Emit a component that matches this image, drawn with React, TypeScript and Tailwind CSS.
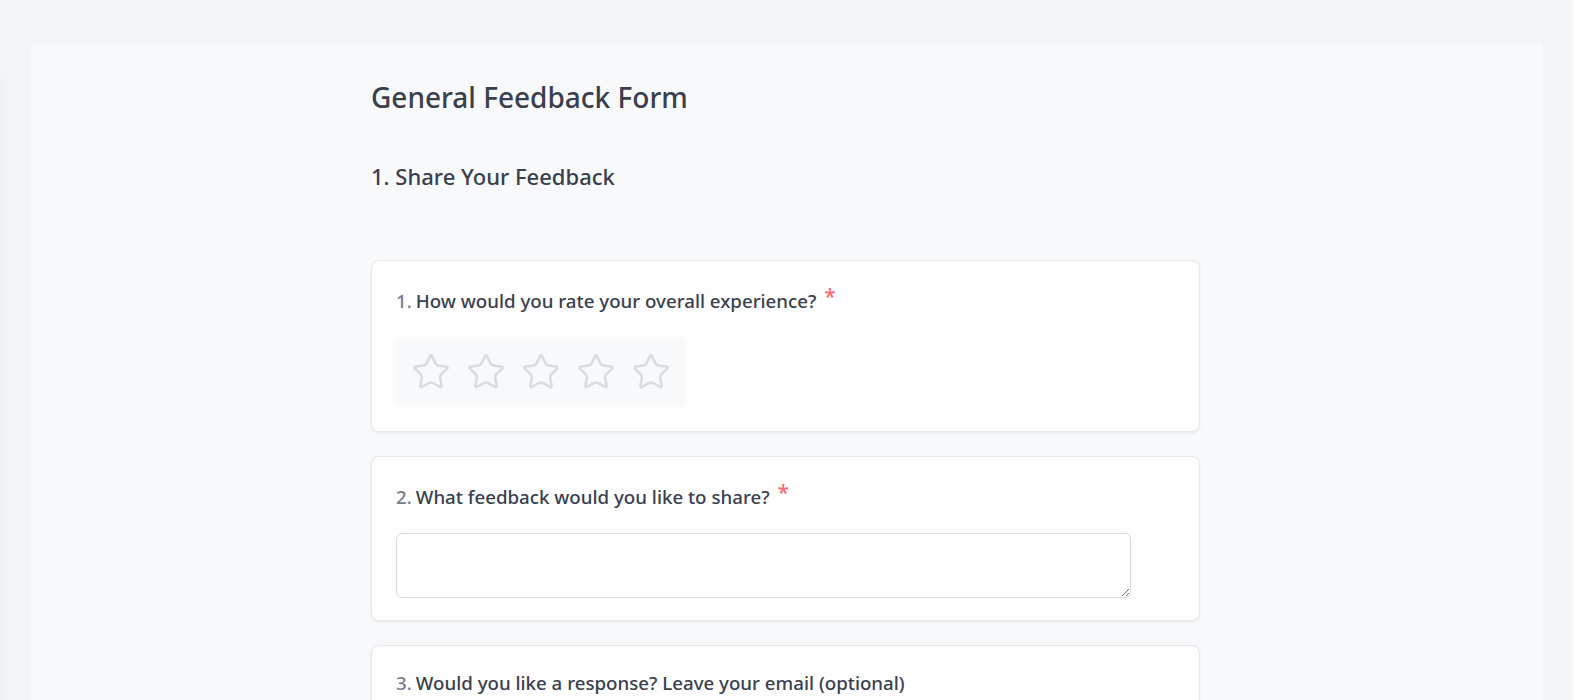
import { Star } from "lucide-react";

const questions = [
  { n: 1, text: "How would you rate your overall experience?", required: true, kind: "rating" },
  { n: 2, text: "What feedback would you like to share?", required: true, kind: "text" },
  { n: 3, text: "Would you like a response? Leave your email (optional)", required: false, kind: "email" },
];

function QuestionLabel({ n, text, required }: { n: number; text: string; required: boolean }) {
  return (
    <div className={`flex items-center text-[18.7px] font-medium text-[#3a3f4d] ${required ? "h-[33px]" : "h-[26px]"}`}>
      <span className="text-[#777c88] mr-[4px]">{n}.</span>
      <span>{text}</span>
      {required && <span className="ml-[8px] text-[21px] leading-none text-[#f26d6d] relative -top-[5px]">*</span>}
    </div>
  );
}

export default function App() {
  return (
    <div className="h-screen overflow-hidden bg-white" style={{ fontFamily: '"Segoe UI", "Noto Sans", sans-serif' }}>
      <div className="relative mr-[15px] h-full bg-[#f4f5f7] pt-[43px] px-[31px]">
        {/* shadow of an off-screen drawer */}
        <div className="absolute top-[78px] -left-[200px] w-[200px] h-[700px] shadow-[0_0_14px_rgba(0,0,0,0.05)]" />
        <div className="h-full bg-[#f8f9fb]">
          <div className="w-[829px] mx-auto pt-[36px] -translate-x-[1px]">
            <h1 className="text-[28px] leading-[36px] text-[#3a3f4d] font-medium">General Feedback Form</h1>
            <h2 className="mt-[46px] text-[22px] leading-[30px] text-[#3a3f4d] font-medium">1. Share Your Feedback</h2>

            <div className="mt-[69px] space-y-6">
              {questions.map((q) => (
                <div key={q.n} className="bg-[#fdfdfd] border border-[#e6e8ec] rounded-lg shadow-[0_1px_3px_rgba(0,0,0,0.07)] p-6">
                  <QuestionLabel n={q.n} text={q.text} required={q.required} />
                  {q.kind === "rating" && (
                    <div className="mt-[19px] inline-flex gap-[15px] px-[15px] py-[15px] bg-[#f8f9fa] rounded-md">
                      {[1, 2, 3, 4, 5].map((i) => (
                        <Star key={i} size={40} strokeWidth={1.5} className="text-[#d9dbe0]" />
                      ))}
                    </div>
                  )}
                  {q.kind === "text" && (
                    <textarea className="mt-[19px] -mb-[2px] block w-[735px] h-[65px] bg-white border border-[#d6d8dd] rounded-md px-3 py-2 text-sm outline-none" />
                  )}
                  {q.kind === "email" && (
                    <input type="email" className="mt-[18px] block w-[735px] h-[42px] bg-white border border-[#d6d8dd] rounded-md px-3 text-sm outline-none" />
                  )}
                </div>
              ))}
            </div>
          </div>
        </div>
      </div>
    </div>
  );
}
